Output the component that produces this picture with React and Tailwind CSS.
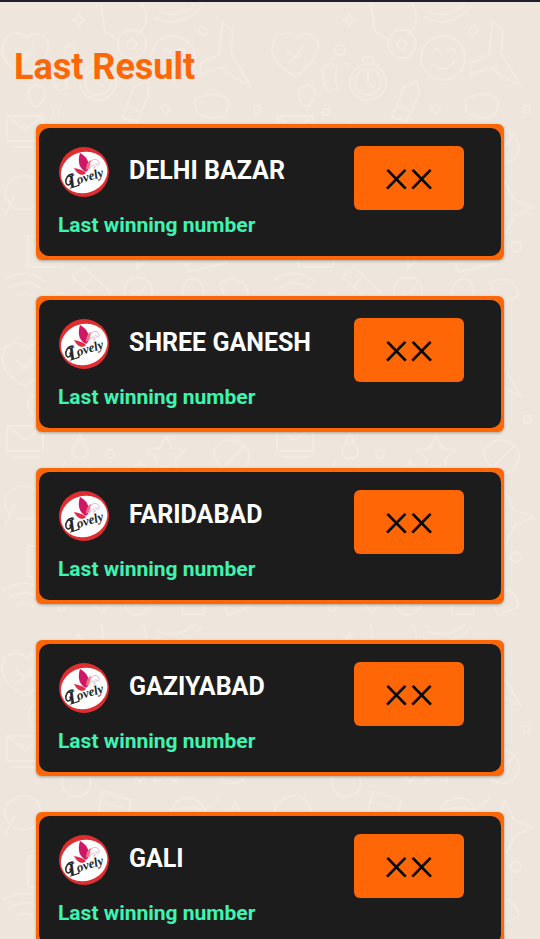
import React from "react";

const games = ["DELHI BAZAR", "SHREE GANESH", "FARIDABAD", "GAZIYABAD", "GALI"];

function DoodleBackground() {
  return (
    <svg className="absolute inset-0 h-full w-full" aria-hidden="true">
      <defs>
        <pattern id="doodles" width="270" height="310" patternUnits="userSpaceOnUse">
          <g fill="none" stroke="#f3ebe2" strokeWidth="1.8" strokeLinecap="round" strokeLinejoin="round">
            <path d="M5 36c8-8 16-4 22-1 8-6 18-3 21 6 2 12-10 26-23 33C12 67 2 57 2 46zM16 48l8 7 9-10M19 60l13-8" />
            <circle cx="70" cy="48" r="5" />
            <circle cx="98" cy="80" r="18" />
            <circle cx="98" cy="80" r="13" />
            <path d="M98 71v10l6 4M92 60l2-5h9l1 5M80 65l-5-4" />
            <circle cx="132" cy="42" r="14" />
            <path d="M127 42l4-5 6 4-3 6-6-1z" />
            <circle cx="173" cy="56" r="22" />
            <path d="M163 50c3-4 7-3 8 1M177 49c3-4 7-3 8 1M164 62c6 8 15 6 20-3" />
            <path d="M222 20l11 9-2 22 20 33-20-10-9-9-22 8 1-12 18-8z" />
            <path d="M154 15c14 8 32 6 47-10M158 9c12 6 26 3 36-6M101 2l4 28 13 7M142 2c7 12 5 20-2 28" />
            <path d="M195 98c12-8 26-8 34 1l-3 12c-9 8-25 5-30-3z" />
            <path d="M52 66l9-5 6 5-2 10 3 10-10 3-4-8zM29 88c6-8 17-5 16 5-2 8-8 13-10 11-5-3-8-9-6-16z" />
            <path d="M122 116l12-31 13-6 2 13-12 27zM127 104l12 5" />
            <path d="M7 114h36v25H7zM7 114l18 14 18-14M12 145h28" />
            <circle cx="80" cy="139" r="8" />
            <path d="M77 130l3-9 4 9M65 150c-7 9-2 23 9 25 13 0 20-10 15-21" />
            <path d="M166 124l6 12 13 2-10 9 2 13-11-6-12 6 3-13-10-9 13-2z" />
            <path d="M220 132c12-9 30 0 29 14-1 14-19 22-28 9-9-11-10-18-1-23zM225 153l20-20" />
            <path d="M6 184c12-15 29-13 35 3 3 15-9 22-21 20-11-2-18-12-14-23zM14 195l-9 18M34 203l3 16" />
            <path d="M103 169l28 9-8 39-30-8zM102 180l20 6M99 189l21 5M98 199l19 4" />
            <circle cx="188" cy="194" r="18" />
            <path d="M160 205c9 7 43-14 60-29M174 188c9-3 21-4 28 0" />
            <path d="M235 179l9 19 20 7-19 8-9 18-8-18-17-8 17-7z" />
            <path d="M28 234h35v31H28zM37 234v-8h17v8M36 242h18v14H36zM70 221c10-8 20-6 24 3l20 3-4 20-22-2c-16-2-20-13-18-24z" />
            <path d="M135 231c10-11 30-8 32 5 5 11-6 22-18 20l-12 11 2-16c-10-4-10-13-4-20zM179 237l39-11 9 35-39 9zM182 241l24 10 12-20" />
            <path d="M4 278c14-10 29-8 40 1M9 286c11-7 21-7 31 0M17 294c5-3 11-3 16 0M72 275l30 25 9-9-27-26zM83 285l8-9" />
            <circle cx="138" cy="289" r="14" />
            <path d="M132 289l5 5 9-10M183 286c3-12 17-12 20 0l1 16h-22zM220 281c15-9 29 0 28 14l-20 8z" />
            <circle cx="110" cy="142" r="4" />
            <circle cx="203" cy="29" r="4" />
            <circle cx="72" cy="201" r="4" />
            <circle cx="246" cy="245" r="5" />
            <circle cx="62" cy="295" r="4" />
            <path d="M79 11l2 5 5 2-5 2-2 5-2-5-5-2 5-2zM140 149l2 4 4 2-4 2-2 4-2-4-4-2 4-2zM254 104h6v7h-6zM53 107h6v6h-6zM160 105l6-3 4 5-4 6z" />
          </g>
        </pattern>
      </defs>
      <rect width="100%" height="100%" fill="url(#doodles)" />
    </svg>
  );
}

function LovelyLogo() {
  return (
    <svg viewBox="0 0 50 50" className="size-[50px] shrink-0" role="img" aria-label="Lovely">
      <circle cx="25" cy="25" r="25" fill="#e22d30" />
      <ellipse cx="25" cy="25.500" rx="23.500" ry="20.500" fill="#fff" transform="rotate(-18 25 25)" />
      <path d="M21 6c7 4 10 9 8 17l-2 2c-6-3-9-9-6-19z" fill="#cf1765" />
      <path d="M27 23c0-5 2-9 5-10-1 4 0 8-5 10z" fill="#ef7280" />
      <path d="M15 21c5 1 9 2 12 5-4 4-9 1-12-5z" fill="#e52946" />
      <path d="M30 23c2-5 4-6 6-4 1 2-2 3-2 1M31 16c2-4 7-5 9-1 1 4-4 4-3 1" fill="none" stroke="#d8b2d4" strokeWidth="1" />
      <path d="M14 27c-5 0-8 5-7 9 2 4 6 1 4-2" fill="none" stroke="#262626" strokeWidth="1.500" strokeLinecap="round" />
      <g transform="rotate(-17 13 38)" fill="#262626" fontFamily="Liberation Serif, serif" fontWeight="700" fontStyle="italic">
        <text x="10" y="41" fontSize="19">L</text>
        <text x="19" y="39" fontSize="13">ovely</text>
      </g>
    </svg>
  );
}

function ResultCard({ name }) {
  return (
    <article className="rounded-md bg-[#ff6606] px-[3px] py-1 shadow-[0_1px_3px_rgba(0,0,0,0.3)]">
      <div className="flex h-32 items-start justify-between rounded-[10px] bg-[#1c1c1c] pt-[18px] pr-[37px] pl-[19px]">
        <div>
          <div className="flex items-center gap-5 pt-px pl-px">
            <LovelyLogo />
            <h2 className="pb-[3px] text-[25px] leading-8 font-bold whitespace-nowrap text-white">{name}</h2>
          </div>
          <p className="pt-3 text-[21px] leading-8 font-bold whitespace-nowrap text-[#3cf5b0]">Last winning number</p>
        </div>
        <div className="flex h-16 w-[110px] shrink-0 items-center justify-center rounded-md bg-[#ff6606] pb-1 text-[48px] leading-none font-[350] text-black">
          ××
        </div>
      </div>
    </article>
  );
}

export default function App() {
  return (
    <div className="relative h-screen overflow-hidden border-t-2 border-[#20202b] bg-[#eee6dd] font-[Roboto,sans-serif]">
      <DoodleBackground />
      <main className="relative">
        <h1 className="px-[14px] pt-[41px] text-[36px] leading-12 font-bold text-[#ff6606]">Last Result</h1>
        <section className="flex flex-col gap-9 px-9 pt-[33px]" aria-label="Last Result">
          {games.map((name) => (
            <ResultCard key={name} name={name} />
          ))}
        </section>
      </main>
    </div>
  );
}
